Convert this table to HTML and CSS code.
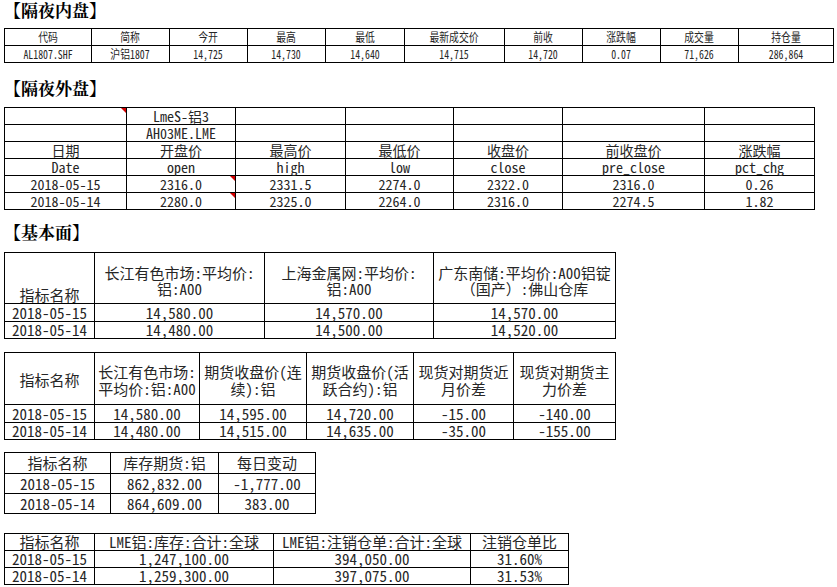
FILE: index.html
```html
<!DOCTYPE html>
<html lang="zh-CN">
<head>
<meta charset="utf-8">
<title>隔夜盘与基本面</title>
<link rel="stylesheet" href="styles.css">
</head>
<body>
<main class="page">
  <h2 class="sec-title">【隔夜内盘】</h2>
  <table class="grid t1">
    <colgroup><col class="c1"><col class="c2"><col class="c3"><col class="c4"><col class="c5"><col class="c6"><col class="c7"><col class="c8"><col class="c9"><col class="c10"></colgroup>
    <tr><td><span class="sq">代码</span></td><td><span class="sq">简称</span></td><td><span class="sq">今开</span></td><td><span class="sq">最高</span></td><td><span class="sq">最低</span></td><td><span class="sq">最新成交价</span></td><td><span class="sq">前收</span></td><td><span class="sq">涨跌幅</span></td><td><span class="sq">成交量</span></td><td><span class="sq">持仓量</span></td></tr>
    <tr><td><span class="sq">AL1807.SHF</span></td><td><span class="sq">沪铝1807</span></td><td><span class="sq">14,725</span></td><td><span class="sq">14,730</span></td><td><span class="sq">14,640</span></td><td><span class="sq">14,715</span></td><td><span class="sq">14,720</span></td><td><span class="sq">0.07</span></td><td><span class="sq">71,626</span></td><td><span class="sq">286,864</span></td></tr>
  </table>

  <h2 class="sec-title sec-gap">【隔夜外盘】</h2>
  <table class="grid t2">
    <colgroup><col class="c1"><col class="c2"><col class="c3"><col class="c4"><col class="c5"><col class="c6"><col class="c7"></colgroup>
    <tr><td class="note"></td><td>LmeS-铝3</td><td></td><td></td><td></td><td></td><td></td></tr>
    <tr><td></td><td>AH03ME.LME</td><td></td><td></td><td></td><td></td><td></td></tr>
    <tr><td>日期</td><td>开盘价</td><td>最高价</td><td>最低价</td><td>收盘价</td><td>前收盘价</td><td>涨跌幅</td></tr>
    <tr><td>Date</td><td>open</td><td>high</td><td>low</td><td>close</td><td>pre_close</td><td>pct_chg</td></tr>
    <tr><td>2018-05-15</td><td class="note">2316.0</td><td>2331.5</td><td>2274.0</td><td>2322.0</td><td>2316.0</td><td>0.26</td></tr>
    <tr><td>2018-05-14</td><td class="note">2280.0</td><td>2325.0</td><td>2264.0</td><td>2316.0</td><td>2274.5</td><td>1.82</td></tr>
  </table>

  <h2 class="sec-title sec-gap3">【基本面】</h2>
  <table class="grid big t3">
    <colgroup><col class="c1"><col class="c2"><col class="c3"><col class="c4"></colgroup>
    <tr class="head"><td class="name">指标名称</td><td>长江有色市场:平均价:<br>铝:A00</td><td>上海金属网:平均价:<br>铝:A00</td><td>广东南储:平均价:A00铝锭<br>（国产）:佛山仓库</td></tr>
    <tr class="r18"><td>2018-05-15</td><td>14,580.00</td><td>14,570.00</td><td>14,570.00</td></tr>
    <tr><td>2018-05-14</td><td>14,480.00</td><td>14,500.00</td><td>14,520.00</td></tr>
  </table>

  <table class="grid big t4">
    <colgroup><col class="c1"><col class="c2"><col class="c3"><col class="c4"><col class="c5"><col class="c6"></colgroup>
    <tr class="head"><td>指标名称</td><td>长江有色市场:<br>平均价:铝:A00</td><td>期货收盘价(连<br>续):铝</td><td>期货收盘价(活<br>跃合约):铝</td><td>现货对期货近<br>月价差</td><td>现货对期货主<br>力价差</td></tr>
    <tr class="r18"><td>2018-05-15</td><td>14,580.00</td><td>14,595.00</td><td>14,720.00</td><td>-15.00</td><td>-140.00</td></tr>
    <tr><td>2018-05-14</td><td>14,480.00</td><td>14,515.00</td><td>14,635.00</td><td>-35.00</td><td>-155.00</td></tr>
  </table>

  <table class="grid big t5">
    <colgroup><col class="c1"><col class="c2"><col class="c3"></colgroup>
    <tr class="r21"><td>指标名称</td><td>库存期货:铝</td><td>每日变动</td></tr>
    <tr><td>2018-05-15</td><td>862,832.00</td><td>-1,777.00</td></tr>
    <tr><td>2018-05-14</td><td>864,609.00</td><td>383.00</td></tr>
  </table>

  <table class="grid big t6">
    <colgroup><col class="c1"><col class="c2"><col class="c3"><col class="c4"></colgroup>
    <tr class="r16"><td>指标名称</td><td>LME铝:库存:合计:全球</td><td>LME铝:注销仓单:合计:全球</td><td>注销仓单比</td></tr>
    <tr><td>2018-05-15</td><td>1,247,100.00</td><td>394,050.00</td><td>31.60%</td></tr>
    <tr><td>2018-05-14</td><td>1,259,300.00</td><td>397,075.00</td><td>31.53%</td></tr>
  </table>
</main>
</body>
</html>
```

FILE: styles.css
```css
* { box-sizing: border-box; }

html, body {
  margin: 0;
  padding: 0;
  background: #ffffff;
}

body {
  width: 837px;
  height: 587px;
  overflow: hidden;
  color: #262626;
  font-family: "Noto Sans Mono CJK SC", "Noto Sans CJK SC", "Liberation Mono", monospace;
}

.page {
  padding-left: 4px;
}

.sec-title {
  margin: 0;
  height: 20px;
  font: 700 17px/20px "Noto Serif CJK SC", "Noto Sans CJK SC", serif;
  color: #000;
  white-space: nowrap;
}

.sec-gap { margin-top: 15px; }
.sec-gap3 { margin-top: 12px; }

/* ---------- generic grid table ---------- */
.grid {
  border-collapse: separate;
  border-spacing: 0;
  table-layout: fixed;
  border-top: 1px solid #000;
  border-left: 1px solid #000;
}

.grid td {
  border-right: 1px solid #000;
  border-bottom: 1px solid #000;
  padding: 0;
  text-align: center;
  vertical-align: middle;
  white-space: nowrap;
}

.note { position: relative; }
.note::after {
  content: "";
  position: absolute;
  top: 0;
  right: 0;
  border-top: 5px solid #d20000;
  border-left: 5px solid transparent;
}

/* ---------- 隔夜内盘 ---------- */
.t1 { margin-top: 8px; width: 830px; }
.t1 td { height: 17px; font-size: 12px; line-height: 16px; }
.t1 .sq { display: inline-block; transform: scaleX(0.82); }
.t1 .c1 { width: 87px; }
.t1 .c2, .t1 .c3, .t1 .c4 { width: 78px; }
.t1 .c5 { width: 79px; }
.t1 .c6 { width: 100px; }
.t1 .c7, .t1 .c8, .t1 .c9 { width: 78px; }
.t1 .c10 { width: 95px; }

/* ---------- 隔夜外盘 ---------- */
.t2 { margin-top: 9px; width: 811px; }
.t2 td { height: 17px; font-size: 14px; line-height: 16px; }
.t2 .c1 { width: 122px; }
.t2 .c2 { width: 109px; }
.t2 .c3 { width: 110px; }
.t2 .c4 { width: 108px; }
.t2 .c5 { width: 109px; }
.t2 .c6 { width: 142px; }
.t2 .c7 { width: 110px; }

/* ---------- 基本面 ---------- */
.big td { height: 17px; font-size: 15px; line-height: 16px; }
.big .r18 td { height: 18px; }
.big .r21 td { height: 21px; }
.big .r16 td { height: 16px; }

.t3 { margin-top: 10px; width: 612px; }
.t3 .head td { height: 51px; vertical-align: bottom; padding-bottom: 6px; }
.t3 .head td.name { padding-bottom: 0; }
.t3 .c1 { width: 90px; }
.t3 .c2 { width: 170px; }
.t3 .c3 { width: 169px; }
.t3 .c4 { width: 182px; }

.t4 { margin-top: 13px; width: 612px; }
.t4 .head td { height: 52px; line-height: 17px; padding-top: 2px; }
.t4 .c1 { width: 90px; }
.t4 .c2 { width: 105px; }
.t4 .c3 { width: 107px; }
.t4 .c4 { width: 107px; }
.t4 .c5 { width: 100px; }
.t4 .c6 { width: 102px; }

.t5 { margin-top: 12px; width: 312px; }
.t5 td { height: 20px; }
.t5 .c1 { width: 106px; }
.t5 .c2 { width: 108px; }
.t5 .c3 { width: 97px; }

.t6 { margin-top: 19px; width: 565px; }
.t6 .c1 { width: 90px; }
.t6 .c2 { width: 179px; }
.t6 .c3 { width: 197px; }
.t6 .c4 { width: 98px; }
```
